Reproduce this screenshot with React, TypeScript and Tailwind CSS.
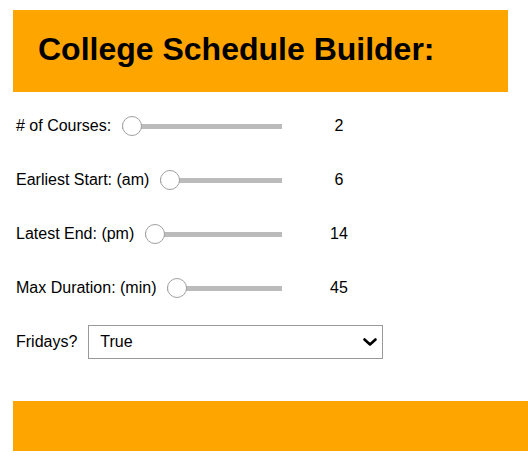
import { useState } from "react";

type SliderRowProps = {
  label: string;
  min: number;
  max: number;
  value: number;
  onChange: (v: number) => void;
};

const rangeClass =
  "h-5 min-w-0 flex-1 cursor-pointer appearance-none bg-transparent " +
  "[&::-webkit-slider-runnable-track]:h-[5px] [&::-webkit-slider-runnable-track]:bg-[#bbbbbb] " +
  "[&::-webkit-slider-thumb]:mt-[-7.5px] [&::-webkit-slider-thumb]:h-5 [&::-webkit-slider-thumb]:w-5 " +
  "[&::-webkit-slider-thumb]:appearance-none [&::-webkit-slider-thumb]:rounded-full " +
  "[&::-webkit-slider-thumb]:border [&::-webkit-slider-thumb]:border-[#a0a0a0] [&::-webkit-slider-thumb]:bg-white";

function SliderRow({ label, min, max, value, onChange }: SliderRowProps) {
  return (
    <div className="flex h-[54px] items-center pl-[3px]">
      <label className="mr-[11px] whitespace-nowrap">{label}</label>
      <input
        className={rangeClass}
        type="range"
        min={min}
        max={max}
        value={value}
        onChange={(e) => onChange(Number(e.target.value))}
      />
      <span className="w-[114px] text-center">{value}</span>
    </div>
  );
}

export default function App() {
  const [courses, setCourses] = useState(2);
  const [start, setStart] = useState(6);
  const [end, setEnd] = useState(14);
  const [duration, setDuration] = useState(45);
  const [fridays, setFridays] = useState("true");

  return (
    <div className="min-h-[460px] overflow-hidden bg-white pl-[13px] font-['Liberation_Sans',Arial,sans-serif] text-[16px] text-black">
      <header className="mt-[10px] flex h-[82px] w-[495px] items-center bg-[#ffa500] pb-[5px] pl-[25px]">
        <h1 className="text-[32px] font-bold leading-none">College Schedule Builder:</h1>
      </header>

      <div className="mt-[7px] w-[383px]">
        <SliderRow label="# of Courses:" min={2} max={8} value={courses} onChange={setCourses} />
        <SliderRow label="Earliest Start: (am)" min={6} max={12} value={start} onChange={setStart} />
        <SliderRow label="Latest End: (pm)" min={14} max={23} value={end} onChange={setEnd} />
        <SliderRow label="Max Duration: (min)" min={45} max={180} value={duration} onChange={setDuration} />

        <div className="flex h-[54px] items-center pl-[3px]">
          <label className="mr-[11px]">Fridays?</label>
          <div className="relative w-[295px]">
            <select
              className="h-[34px] w-full appearance-none border border-[#999999] bg-white pl-[11px] text-[16px] outline-none"
              value={fridays}
              onChange={(e) => setFridays(e.target.value)}
            >
              <option value="true">True</option>
              <option value="false">False</option>
            </select>
            <svg
              className="pointer-events-none absolute right-[6px] top-[13px]"
              width="14"
              height="8"
              viewBox="0 0 14 8"
              fill="none"
            >
              <path d="M1.5 1.5 L7 6.5 L12.5 1.5" stroke="#000" strokeWidth="2.6" strokeLinecap="round" strokeLinejoin="round" />
            </svg>
          </div>
        </div>
      </div>

      <footer className="mt-[32px] h-[50px] bg-[#ffa500]" />
    </div>
  );
}
